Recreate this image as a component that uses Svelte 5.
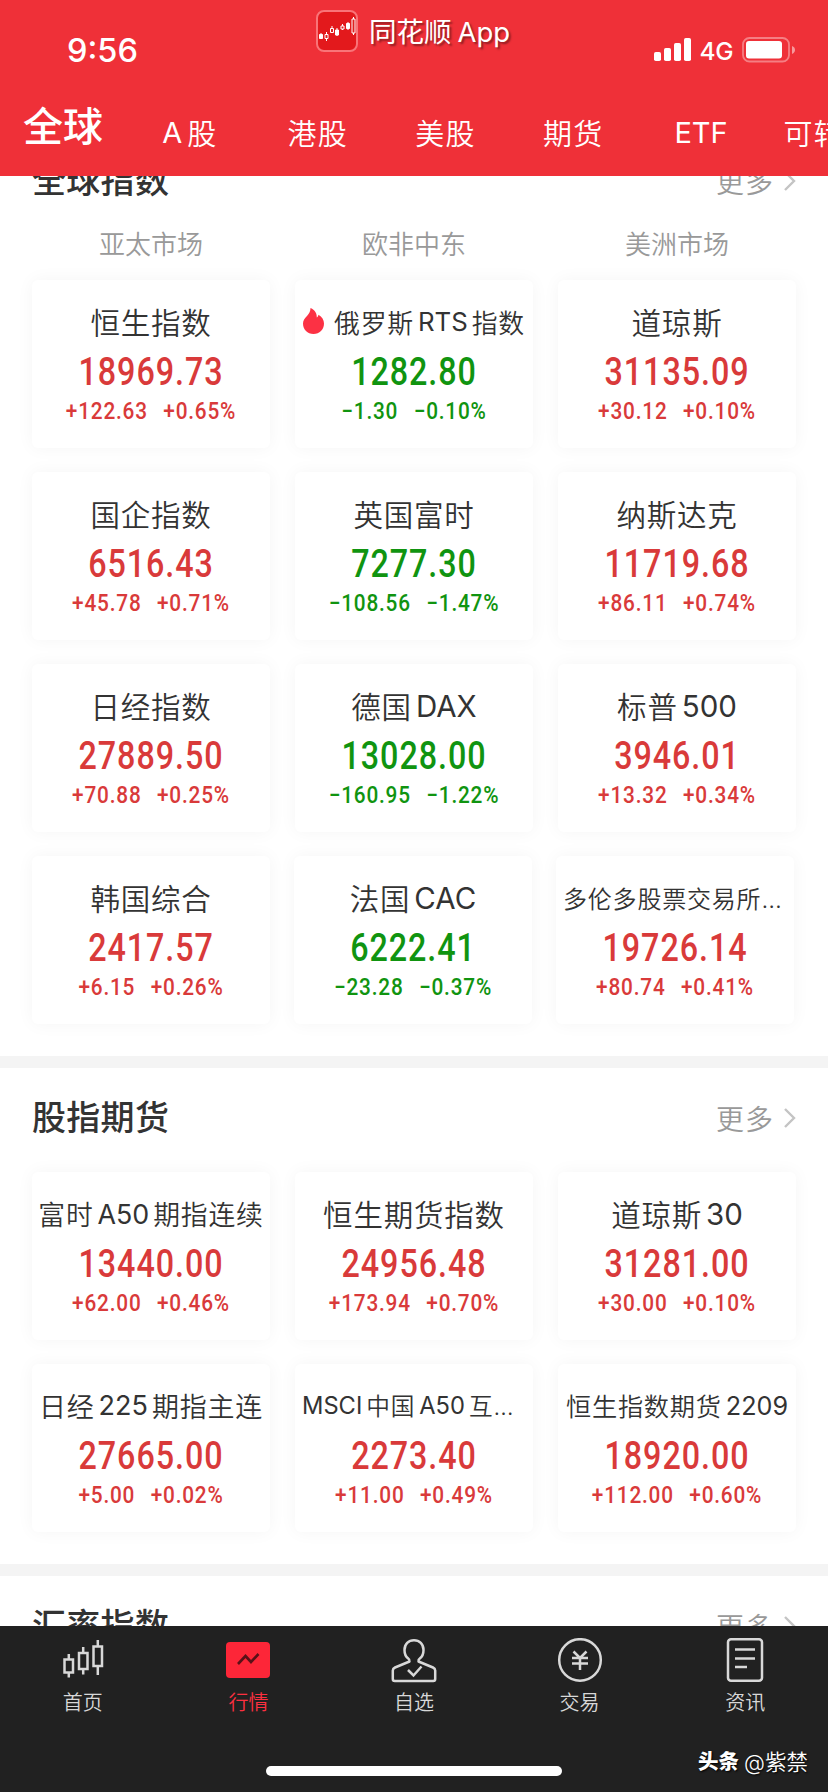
<script lang="ts">
  type Quote = {
    name: string;
    price: string;
    change: string;
    percent: string;
    size?: number;
    hot?: boolean;
  };

  const markets = ['A股', '港股', '美股', '期货', 'ETF', '可转债'];
  const regions = ['亚太市场', '欧非中东', '美洲市场'];

  const globalRows: Quote[][] = [
    [
      { name: '恒生指数', price: '18969.73', change: '+122.63', percent: '+0.65%' },
      { name: '俄罗斯RTS指数', price: '1282.80', change: '−1.30', percent: '−0.10%', size: 25.8, hot: true },
      { name: '道琼斯', price: '31135.09', change: '+30.12', percent: '+0.10%' },
    ],
    [
      { name: '国企指数', price: '6516.43', change: '+45.78', percent: '+0.71%' },
      { name: '英国富时', price: '7277.30', change: '−108.56', percent: '−1.47%' },
      { name: '纳斯达克', price: '11719.68', change: '+86.11', percent: '+0.74%' },
    ],
    [
      { name: '日经指数', price: '27889.50', change: '+70.88', percent: '+0.25%' },
      { name: '德国DAX', price: '13028.00', change: '−160.95', percent: '−1.22%' },
      { name: '标普500', price: '3946.01', change: '+13.32', percent: '+0.34%' },
    ],
    [
      { name: '韩国综合', price: '2417.57', change: '+6.15', percent: '+0.26%' },
      { name: '法国CAC', price: '6222.41', change: '−23.28', percent: '−0.37%' },
      { name: '多伦多股票交易所…', price: '19726.14', change: '+80.74', percent: '+0.41%', size: 24 },
    ],
  ];

  const futureRows: Quote[][] = [
    [
      { name: '富时A50期指连续', price: '13440.00', change: '+62.00', percent: '+0.46%', size: 26.8 },
      { name: '恒生期货指数', price: '24956.48', change: '+173.94', percent: '+0.70%' },
      { name: '道琼斯30', price: '31281.00', change: '+30.00', percent: '+0.10%' },
    ],
    [
      { name: '日经225期指主连', price: '27665.00', change: '+5.00', percent: '+0.02%', size: 27 },
      { name: 'MSCI中国A50互…', price: '2273.40', change: '+11.00', percent: '+0.49%', size: 23.7 },
      { name: '恒生指数期货2209', price: '18920.00', change: '+112.00', percent: '+0.60%', size: 25.2 },
    ],
  ];

  const tabs = [
    { id: 'home', label: '首页' },
    { id: 'quotes', label: '行情' },
    { id: 'watch', label: '自选' },
    { id: 'trade', label: '交易' },
    { id: 'news', label: '资讯' },
  ];

  let activeTab = $state('quotes');

  // latin runs sit apart from the hanzi around them
  function runs(name: string) {
    return name.match(/[A-Z0-9]+|[^A-Z0-9]+/g) ?? [];
  }

  function isLatin(run: string) {
    return /^[A-Z0-9]/.test(run);
  }
</script>

<div class="screen">
  <header>
    <div class="status">
      <span class="time">9:56</span>
      <div class="signal">
        <svg width="38" height="24" viewBox="0 0 38 24" fill="#fff">
          <rect x="0" y="14" width="7" height="9" rx="1.8" />
          <rect x="10" y="10" width="7" height="13" rx="1.8" />
          <rect x="20" y="5" width="7" height="18" rx="1.8" />
          <rect x="30" y="0" width="7" height="23" rx="1.8" />
        </svg>
        <span class="net">4G</span>
        <svg class="battery" width="54" height="26" viewBox="0 0 54 26">
          <rect x="1" y="1" width="46" height="23.5" rx="6.5" fill="none" stroke="#fff" stroke-opacity=".38" stroke-width="1.8" />
          <rect x="4" y="4" width="36" height="17.5" rx="3" fill="#fff" />
          <path d="M50 9v8c2-.8 3-2.200 3-4s-1-3.200-3-4z" fill="#fff" fill-opacity=".5" />
        </svg>
      </div>
    </div>

    <div class="brand">
      <svg width="42" height="42" viewBox="0 0 42 42">
        <rect x="1" y="1" width="40" height="40" rx="7" fill="#e3191c" stroke="#f97478" stroke-width="2" />
        <g fill="#fff" stroke="#fff" stroke-width="1">
          <path d="M5 23v6M21 18v8M32 12v8" />
          <path d="M3.500 24.500h3v4h-3zM19.500 20h3v5h-3zM30.500 13.500h3v5h-3z" />
          <path d="M10.500 22v9M16 16v2M26.500 14v6M37.500 7v18" fill="none" />
        </g>
        <g fill="#df2020" stroke="#fff" stroke-width="1">
          <path d="M9 24.500h3v4H9zM14.500 18.500h3v4h-3zM25 16h3v3h-3zM36 9h3v14h-3z" />
        </g>
      </svg>
      <div class="brand-name"><span>同花顺</span><span>App</span></div>
    </div>

    <nav class="markets">
      <button class="market current">全球</button>
      {#each markets as market}
        <button class="market">
          {#each runs(market) as run}<span class:latin={isLatin(run)}>{run}</span>{/each}
        </button>
      {/each}
    </nav>
  </header>

  <main>
    <section class="global">
      {@render heading('全球指数')}
      <div class="regions">
        {#each regions as region}
          <span>{region}</span>
        {/each}
      </div>
      {@render grid(globalRows)}
    </section>

    <section>
      {@render heading('股指期货')}
      {@render grid(futureRows)}
    </section>

    <section>
      {@render heading('汇率指数')}
    </section>
  </main>

  <footer>
    <nav class="tabs">
      {#each tabs as tab}
        <button class="tab" class:active={activeTab === tab.id} onclick={() => (activeTab = tab.id)}>
          {@render tabIcon(tab.id)}
          <span>{tab.label}</span>
        </button>
      {/each}
    </nav>
    <div class="home-bar"></div>
    <div class="credit"><b>头条</b><span>@紫禁</span></div>
  </footer>
</div>

{#snippet heading(title: string)}
  <div class="heading">
    <h2>{title}</h2>
    <div class="more">
      <span>更多</span>
      <svg width="14" height="22" viewBox="0 0 14 22" fill="none" stroke="#c4c4c4" stroke-width="2.400">
        <path d="M2 2l9 9-9 9" />
      </svg>
    </div>
  </div>
{/snippet}

{#snippet grid(rows: Quote[][])}
  <div class="grid">
    {#each rows as row}
      <div class="row">
        {#each row as quote}
          <article class="card" class:down={quote.change.startsWith('−')}>
            <div class="name" class:cut={quote.name.endsWith('…')} style="font-size: {quote.size ?? 29.5}px">
              {#if quote.hot}
                <svg class="flame" width="21" height="26" viewBox="0 0 21 26" fill="#fc3144">
                  <path d="M7.500 0c4.500 2 6.500 5.500 6.300 9.500 1-.6 1.500-1.600 1.700-2.700C19 9 21 12 21 15.500 21 21.500 16.500 26 10.500 26S0 21.500 0 15.500C0 12 2 10 4.200 7.700 6.200 5.500 7.500 3.500 7.500 0z" />
                </svg>
              {/if}
              {#each runs(quote.name) as run}<span class:latin={isLatin(run)}>{run}</span>{/each}
            </div>
            <div class="price">{quote.price}</div>
            <div class="delta">
              <span>{quote.change}</span>
              <span>{quote.percent}</span>
            </div>
          </article>
        {/each}
      </div>
    {/each}
  </div>
{/snippet}

{#snippet tabIcon(id: string)}
  <svg width="46" height="46" viewBox="0 0 46 46" fill="none" stroke="#d8d8d8" stroke-width="2.500">
    {#if id === 'home'}
      <path d="M4.500 21.500h8.500v13H4.500zM19 15h8.500v16H19zM33.500 8.500H42v19.500h-8.500z" />
      <path d="M8.800 16v5.500M8.800 34.500v5M23.200 9v6M23.200 31v5.500M37.800 2v6.500M37.800 28v9" />
    {:else if id === 'quotes'}
      <rect x="1" y="4" width="44" height="36" rx="4" fill="#fd2638" stroke="none" />
      <path d="M13 26l7.500-8 5.500 6 7.500-8" stroke="#5a1118" stroke-width="2.600" />
    {:else if id === 'watch'}
      <path d="M18.500 23.500c.3-1.500-.2-2.300-1.500-3.200-2.800-2-3.500-5-3.500-8.300C13.500 6 17.500 2.200 23 2.200S32.500 6 32.500 12c0 3.300-.7 6.300-3.500 8.300-1.300.9-1.800 1.700-1.500 3.200L42 29.500c1.500.7 2.200 1.500 2.200 3V41c0 1.300-.7 2-2 2H3.800c-1.300 0-2-.7-2-2v-8.500c0-1.500.7-2.300 2.200-3z" stroke-linejoin="round" />
      <path d="M17 32l5.500 5.500 8-9" />
    {:else if id === 'trade'}
      <circle cx="23" cy="22" r="20.800" />
      <path d="M16.500 13.500L23 20l6.500-6.500M15 20h16M15 25.500h16M23 20v12" />
    {:else}
      <rect x="6" y="1.300" width="34" height="41.500" rx="3" />
      <path d="M13 11.500h20M13 20.500h20M13 29h12" />
    {/if}
  </svg>
{/snippet}

<style>
  :global(body) { background: #fff; }

  .screen {
    width: 828px;
    height: 1792px;
    position: relative;
    display: flex;
    flex-direction: column;
    overflow: hidden;
    background: #fff;
    color: #333;
    font-family: Inter, 'Noto Sans CJK SC', sans-serif;
  }

  button {
    border: none;
    background: none;
    padding: 0;
    margin: 0;
    color: inherit;
    font: inherit;
    cursor: pointer;
  }

  svg { display: block; flex-shrink: 0; }

  header {
    height: 176px;
    flex-shrink: 0;
    background: #ef3038;
    color: #fff;
  }

  .status {
    height: 100px;
    box-sizing: border-box;
    padding: 0 32px 0 67px;
    display: flex;
    align-items: center;
    justify-content: space-between;
  }
  .time { font-size: 32.5px; font-weight: 550; line-height: 40px; padding-top: 1px; }
  .signal { display: flex; align-items: center; }
  .net { font-size: 24.5px; font-weight: 450; letter-spacing: -.5px; margin: 1px 9px 0 8px; }

  .brand {
    position: absolute;
    top: 10px;
    left: 316px;
    display: flex;
    align-items: center;
    gap: 11px;
  }
  .brand-name {
    display: flex;
    align-items: baseline;
    gap: 6px;
    margin-top: -3px;
    font-size: 27.5px;
    font-weight: 400;
    white-space: nowrap;
    text-shadow: 2px 2px 2px rgba(0, 0, 0, .4);
  }

  .markets { display: flex; height: 64px; }
  .market {
    width: 127.8px;
    flex-shrink: 0;
    display: flex;
    align-items: center;
    justify-content: center;
    gap: 5px;
    font-size: 29px;
    font-weight: 350;
    letter-spacing: 1.3px;
    white-space: nowrap;
  }
  .market.current {
    width: 126px;
    font-size: 40px;
    font-weight: 500;
    letter-spacing: 0;
    padding-bottom: 16px;
  }
  .latin { font-weight: 380; letter-spacing: 0; padding-top: 1px; }

  main { height: 1450px; flex-shrink: 0; overflow: hidden; }

  section { border-bottom: 12px solid #f4f4f4; padding-bottom: 32px; }
  section.global { margin-top: -45px; }

  .heading {
    height: 98px;
    box-sizing: border-box;
    padding: 0 31px 3px 32px;
    display: flex;
    align-items: center;
    justify-content: space-between;
  }
  h2 { margin: 0; font-size: 34px; font-weight: 500; letter-spacing: .3px; }
  .more {
    display: flex;
    align-items: center;
    gap: 9px;
    margin-top: 5px;
    font-size: 28px;
    font-weight: 350;
    letter-spacing: 1px;
    color: #999;
  }

  .regions {
    display: flex;
    justify-content: space-between;
    padding: 0 32px;
    height: 45px;
    line-height: 32px;
    font-size: 26px;
    font-weight: 350;
    color: #999;
  }
  .regions span { width: 238px; text-align: center; }

  .grid {
    display: flex;
    flex-direction: column;
    gap: 24px;
    padding: 6px 32px 0;
  }
  .row { display: flex; justify-content: space-between; }
  .global .row:last-child { padding-right: 2px; }

  .card {
    width: 238px;
    height: 168px;
    box-sizing: border-box;
    padding-top: 21px;
    border-radius: 6px;
    background: #fff;
    box-shadow: 0 0 18px rgba(0, 0, 0, .045);
    color: #d93a3a;
  }
  .card.down { color: #109410; }

  .name {
    height: 40px;
    display: flex;
    align-items: center;
    justify-content: center;
    gap: 4px;
    margin-bottom: 3px;
    font-weight: 350;
    letter-spacing: .8px;
    white-space: nowrap;
    color: #333;
  }
  .name.cut { justify-content: flex-start; padding-left: 7px; }
  .flame { margin-right: 6px; }

  /* squeezed to get the narrow figures of a DIN face */
  .price {
    height: 56px;
    line-height: 56px;
    text-align: center;
    font-family: Roboto, sans-serif;
    font-size: 38px;
    font-weight: 550;
    letter-spacing: 1.1px;
    transform: scaleX(.85);
  }
  .delta {
    display: flex;
    justify-content: center;
    gap: 17.5px;
    margin-top: -1px;
    line-height: 24px;
    font-family: Roboto, sans-serif;
    font-size: 23.5px;
    font-weight: 500;
    letter-spacing: .9px;
    transform: scaleX(.885);
  }

  footer {
    position: relative;
    height: 166px;
    background: #212121;
    color: #d8d8d8;
  }
  .tabs { display: flex; }
  .tab {
    flex: 1;
    display: flex;
    flex-direction: column;
    align-items: center;
    padding-top: 12px;
    font-size: 20px;
    font-weight: 350;
    line-height: 38px;
  }
  .tab.active { color: #fd3040; }

  .home-bar {
    position: absolute;
    left: 266px;
    top: 140px;
    width: 296px;
    height: 10px;
    border-radius: 5px;
    background: #fff;
  }

  .credit {
    position: absolute;
    right: 20px;
    bottom: 14px;
    display: flex;
    align-items: center;
    gap: 5px;
    color: #fff;
    font-size: 21.5px;
    font-weight: 350;
    line-height: 32px;
    text-shadow: 1px 1px 2px #000;
  }
  .credit b { font-size: 20.5px; font-weight: 900; }
</style>
